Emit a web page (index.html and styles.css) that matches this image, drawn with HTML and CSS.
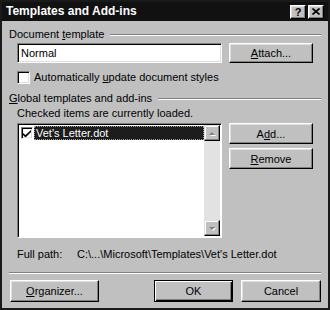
FILE: index.html
```html
<!DOCTYPE html>
<html lang="en">
<head>
    <meta charset="UTF-8">
    <title>Templates and Add-ins</title>
    <link rel="stylesheet" href="styles.css">
</head>
<body>

    <div class="dialog">
        <div class="titlebar">
            <span class="title">Templates and Add-ins</span>
            <div class="caption-buttons">
                <button class="cap-btn help">?</button>
                <button class="cap-btn close">
                    <svg width="8" height="7" viewBox="0 0 8 7">
                        <path d="M0.5 0.5 L7.5 6.5 M7.5 0.5 L0.5 6.5" stroke="#000" stroke-width="1.6" fill="none"/>
                    </svg>
                </button>
            </div>
        </div>

        <div class="content">
            <div class="group-title">
                <span>Document <u>t</u>emplate</span>
                <div class="etch"></div>
            </div>
            <div class="template-row">
                <div class="textbox">Normal</div>
                <button class="btn"><u>A</u>ttach...</button>
            </div>
            <div class="check-row">
                <span class="checkbox"></span>
                <span>Automatically <u>u</u>pdate document styles</span>
            </div>

            <div class="group-title">
                <span><u>G</u>lobal templates and add-ins</span>
                <div class="etch"></div>
            </div>
            <div class="hint">Checked items are currently loaded.</div>
            <div class="list-row">
                <div class="listbox">
                    <div class="items">
                        <div class="item">
                            <span class="checkbox small">
                                <svg width="8" height="7" viewBox="0 0 8 7">
                                    <path d="M0 3 L0 5 L2 7 L3 7 L8 2 L8 0 L2.5 5 Z" fill="#000"/>
                                </svg>
                            </span>
                            <span class="item-label">Vet's Letter.dot</span>
                        </div>
                    </div>
                    <div class="scrollbar">
                        <div class="arrow">
                            <svg width="8" height="5" viewBox="0 0 8 5">
                                <path d="M1 4 L4 1 L7 4 Z" fill="#808080"/>
                            </svg>
                        </div>
                        <div class="track"></div>
                        <div class="arrow">
                            <svg width="8" height="5" viewBox="0 0 8 5">
                                <path d="M1 1 L7 1 L4 4 Z" fill="#808080"/>
                            </svg>
                        </div>
                    </div>
                </div>
                <div class="side-buttons">
                    <button class="btn">A<u>d</u>d...</button>
                    <button class="btn"><u>R</u>emove</button>
                </div>
            </div>

            <div class="path-row">
                <span class="path-label">Full path:</span>
                <span>C:\...\Microsoft\Templates\Vet's Letter.dot</span>
            </div>

            <div class="separator"></div>

            <div class="footer">
                <button class="btn organizer"><u>O</u>rganizer...</button>
                <div class="footer-right">
                    <button class="btn default">OK</button>
                    <button class="btn cancel">Cancel</button>
                </div>
            </div>
        </div>
    </div>

</body>
</html>
```

FILE: styles.css
```css
* {
    box-sizing: border-box;
    margin: 0;
    padding: 0;
}

body {
    background: #c0c0c0;
}

.dialog {
    width: 330px;
    height: 310px;
    background: #c0c0c0;
    border: 2px solid #1a1a1a;
    color: #000;
    font-family: 'Liberation Sans', Arial, sans-serif;
    font-size: 11px;
    line-height: 13px;
}

/* title bar */
.titlebar {
    height: 19px;
    background: #111;
    color: #fff;
    display: flex;
    align-items: center;
    justify-content: space-between;
    padding: 0 4px;
}

.title {
    font-weight: bold;
    font-size: 12px;
}

.caption-buttons {
    display: flex;
    gap: 2px;
}

.cap-btn {
    width: 16px;
    height: 14px;
    background: #c0c0c0;
    border: 1px solid;
    border-color: #fff #000 #000 #fff;
    box-shadow: inset -1px -1px #808080, inset 1px 1px #dfdfdf;
    display: flex;
    align-items: center;
    justify-content: center;
    font-family: 'Liberation Sans', Arial, sans-serif;
    font-weight: bold;
    font-size: 11px;
    color: #000;
}

/* body */
.content {
    padding: 7px 7px 0;
    display: flex;
    flex-direction: column;
}

.group-title {
    display: flex;
    align-items: center;
}

.etch {
    flex: 1;
    margin-left: 6px;
    border-top: 1px solid #808080;
    border-bottom: 1px solid #fff;
}

.template-row {
    display: flex;
    gap: 7px;
    margin: 2px 0 0 8px;
}

.textbox {
    width: 205px;
    height: 20px;
    background: #fff;
    border: 1px solid;
    border-color: #808080 #fff #fff #808080;
    box-shadow: inset 1px 1px #000, inset -1px -1px #dfdfdf;
    padding: 3px 3px;
}

.btn {
    width: 84px;
    height: 20px;
    background: #c0c0c0;
    border: 1px solid;
    border-color: #fff #000 #000 #fff;
    box-shadow: inset -1px -1px #808080, inset 1px 1px #dfdfdf;
    font-family: 'Liberation Sans', Arial, sans-serif;
    font-size: 11px;
    color: #000;
}

.check-row {
    display: flex;
    align-items: center;
    gap: 4px;
    margin: 8px 0 0 8px;
}

.checkbox {
    width: 13px;
    height: 13px;
    background: #fff;
    border: 1px solid;
    border-color: #808080 #fff #fff #808080;
    box-shadow: inset 1px 1px #000, inset -1px -1px #dfdfdf;
    display: flex;
    align-items: center;
    justify-content: center;
}

.checkbox.small {
    width: 12px;
    height: 12px;
}

.check-row + .group-title {
    margin-top: 8px;
}

.hint {
    margin: 2px 0 0 8px;
}

.list-row {
    display: flex;
    gap: 7px;
    margin: 3px 0 0 8px;
}

.listbox {
    width: 205px;
    height: 115px;
    display: flex;
    border: 1px solid;
    border-color: #808080 #fff #fff #808080;
    box-shadow: inset 1px 1px #000;
    padding: 1px 1px 1px 1px;
    background: #fff;
}

.items {
    flex: 1;
    padding: 1px 0 0 1px;
}

.item {
    display: flex;
    align-items: center;
    height: 14px;
}

.item .checkbox {
    margin-left: 1px;
}

.item-label {
    flex: 1;
    height: 14px;
    margin-left: 1px;
    padding-left: 1px;
    background: #1c1c1c;
    color: #fff;
    border: 1px dotted #9a9a9a;
    line-height: 12px;
}

.scrollbar {
    width: 16px;
    display: flex;
    flex-direction: column;
    background: #e2e2e2;
}

.arrow {
    height: 16px;
    background: #c0c0c0;
    border: 1px solid;
    border-color: #dfdfdf #000 #000 #dfdfdf;
    box-shadow: inset -1px -1px #808080, inset 1px 1px #fff;
    display: flex;
    align-items: center;
    justify-content: center;
}

.arrow svg {
    filter: drop-shadow(1px 1px 0 #fff);
}

.track {
    flex: 1;
}

.side-buttons {
    display: flex;
    flex-direction: column;
    gap: 4px;
}

.side-buttons .btn {
    height: 21px;
}

.path-row {
    display: flex;
    margin: 10px 0 0 8px;
}

.path-label {
    width: 60px;
}

.separator {
    margin-top: 11px;
    border-top: 1px solid #808080;
    border-bottom: 1px solid #fff;
}

.footer {
    display: flex;
    justify-content: space-between;
    margin-top: 6px;
}

.footer .btn {
    height: 22px;
}

.organizer {
    width: 89px;
    margin-left: 1px;
}

.footer-right {
    display: flex;
    gap: 8px;
}

.btn.default {
    width: 79px;
    border-color: #000;
    box-shadow: inset 1px 1px #fff, inset -1px -1px #000, inset -2px -2px #808080;
}

.btn.cancel {
    width: 80px;
}
```
